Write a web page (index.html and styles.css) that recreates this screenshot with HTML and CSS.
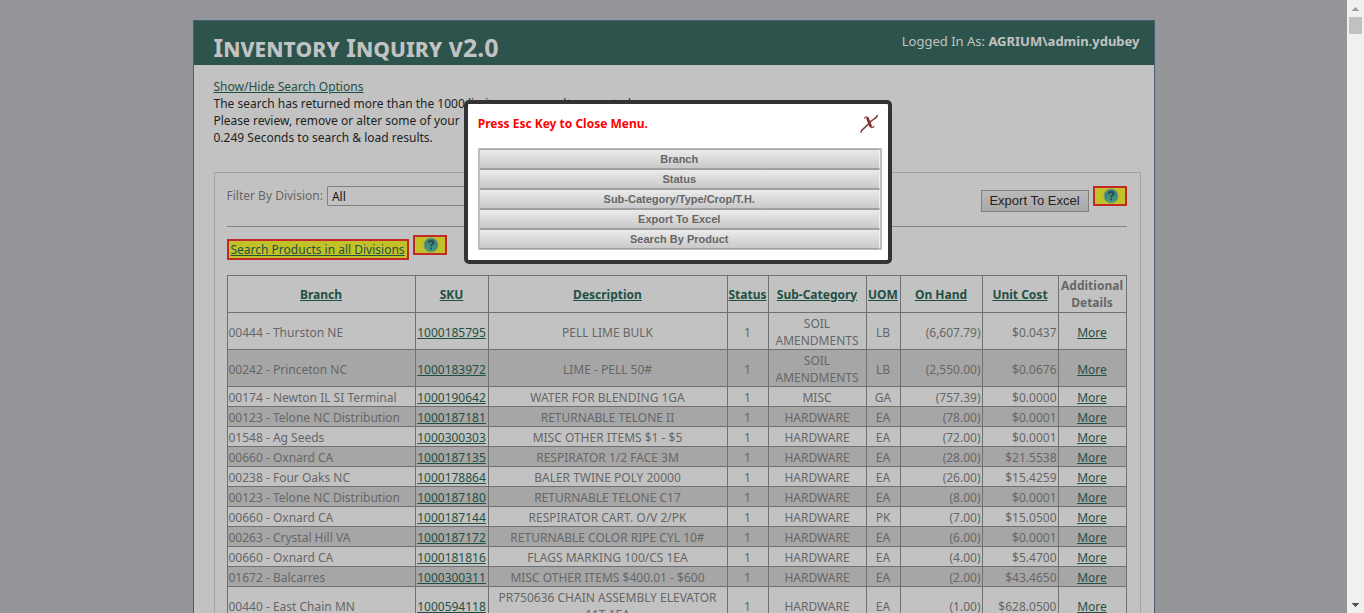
FILE: index.html
```html
<!DOCTYPE html>
<html lang="en">
<head>
<meta charset="utf-8">
<title>Inventory Inquiry v2.0</title>
<link rel="stylesheet" href="styles.css">
</head>
<body>
<svg width="0" height="0" class="defs" aria-hidden="true">
  <defs>
    <radialGradient id="ball" cx="50%" cy="80%" r="70%"><stop offset="0" stop-color="#43a07c"/><stop offset="1" stop-color="#427a80"/></radialGradient>
    <symbol id="help" viewBox="0 0 16 16">
      <circle cx="8" cy="8" r="7" fill="url(#ball)" stroke="#6d9f6c" stroke-width="1"/>
      <path d="M5.8 5.9C6 3.4 10.3 3.4 10.3 5.9C10.3 7.6 8.1 7.5 8.1 9.2" fill="none" stroke="#22504a" stroke-width="1.9"/>
      <path d="M7.1 10.4h2v2h-2z" fill="#22504a"/>
    </symbol>
  </defs>
</svg>
<div class="view">
  <div class="page">
    <header class="header">
      <h1 class="title">Inventory Inquiry v2.0</h1>
      <div class="login">Logged In As: <strong>AGRIUM\admin.ydubey</strong></div>
    </header>
    <main class="main">
      <div class="messages">
        <a href="#">Show/Hide Search Options</a>
        <p>The search has returned more than the 1000 limit or max results expected</p>
        <p>Please review, remove or alter some of your</p>
        <p>0.249 Seconds to search &amp; load results.</p>
      </div>
      <section class="panel">
        <div class="toolbar">
          <div class="filter">
            <label for="division">Filter By Division:</label>
            <select id="division" class="division"><option>All</option></select>
          </div>
          <div class="export">
            <button type="button" class="export-btn">Export To Excel</button>
            <button type="button" class="help" aria-label="Export help"><svg width="16" height="16"><use href="#help"/></svg></button>
          </div>
        </div>
        <div class="search-row">
          <a href="#" class="search-all">Search Products in all Divisions</a>
          <button type="button" class="help" aria-label="Search help"><svg width="16" height="16"><use href="#help"/></svg></button>
        </div>
        <table class="grid">
          <colgroup><col class="c-branch"><col class="c-sku"><col class="c-desc"><col class="c-status"><col class="c-sub"><col class="c-uom"><col class="c-hand"><col class="c-cost"><col class="c-more"></colgroup>
          <thead>
            <tr><th><a href="#">Branch</a></th><th><a href="#">SKU</a></th><th><a href="#">Description</a></th><th><a href="#">Status</a></th><th><a href="#">Sub-Category</a></th><th><a href="#">UOM</a></th><th><a href="#">On Hand</a></th><th><a href="#">Unit Cost</a></th><th>Additional<br>Details</th></tr>
          </thead>
          <tbody>
            <tr><td>00444 - Thurston NE</td><td><a href="#">1000185795</a></td><td>PELL LIME BULK</td><td>1</td><td>SOIL<br>AMENDMENTS</td><td>LB</td><td>(6,607.79)</td><td>$0.0437</td><td><a href="#">More</a></td></tr>
            <tr><td>00242 - Princeton NC</td><td><a href="#">1000183972</a></td><td>LIME - PELL 50#</td><td>1</td><td>SOIL<br>AMENDMENTS</td><td>LB</td><td>(2,550.00)</td><td>$0.0676</td><td><a href="#">More</a></td></tr>
            <tr><td>00174 - Newton IL SI Terminal</td><td><a href="#">1000190642</a></td><td>WATER FOR BLENDING 1GA</td><td>1</td><td>MISC</td><td>GA</td><td>(757.39)</td><td>$0.0000</td><td><a href="#">More</a></td></tr>
            <tr><td>00123 - Telone NC Distribution</td><td><a href="#">1000187181</a></td><td>RETURNABLE TELONE II</td><td>1</td><td>HARDWARE</td><td>EA</td><td>(78.00)</td><td>$0.0001</td><td><a href="#">More</a></td></tr>
            <tr><td>01548 - Ag Seeds</td><td><a href="#">1000300303</a></td><td>MISC OTHER ITEMS $1 - $5</td><td>1</td><td>HARDWARE</td><td>EA</td><td>(72.00)</td><td>$0.0001</td><td><a href="#">More</a></td></tr>
            <tr><td>00660 - Oxnard CA</td><td><a href="#">1000187135</a></td><td>RESPIRATOR 1/2 FACE 3M</td><td>1</td><td>HARDWARE</td><td>EA</td><td>(28.00)</td><td>$21.5538</td><td><a href="#">More</a></td></tr>
            <tr><td>00238 - Four Oaks NC</td><td><a href="#">1000178864</a></td><td>BALER TWINE POLY 20000</td><td>1</td><td>HARDWARE</td><td>EA</td><td>(26.00)</td><td>$15.4259</td><td><a href="#">More</a></td></tr>
            <tr><td>00123 - Telone NC Distribution</td><td><a href="#">1000187180</a></td><td>RETURNABLE TELONE C17</td><td>1</td><td>HARDWARE</td><td>EA</td><td>(8.00)</td><td>$0.0001</td><td><a href="#">More</a></td></tr>
            <tr><td>00660 - Oxnard CA</td><td><a href="#">1000187144</a></td><td>RESPIRATOR CART. O/V 2/PK</td><td>1</td><td>HARDWARE</td><td>PK</td><td>(7.00)</td><td>$15.0500</td><td><a href="#">More</a></td></tr>
            <tr><td>00263 - Crystal Hill VA</td><td><a href="#">1000187172</a></td><td>RETURNABLE COLOR RIPE CYL 10#</td><td>1</td><td>HARDWARE</td><td>EA</td><td>(6.00)</td><td>$0.0001</td><td><a href="#">More</a></td></tr>
            <tr><td>00660 - Oxnard CA</td><td><a href="#">1000181816</a></td><td>FLAGS MARKING 100/CS 1EA</td><td>1</td><td>HARDWARE</td><td>EA</td><td>(4.00)</td><td>$5.4700</td><td><a href="#">More</a></td></tr>
            <tr><td>01672 - Balcarres</td><td><a href="#">1000300311</a></td><td>MISC OTHER ITEMS $400.01 - $600</td><td>1</td><td>HARDWARE</td><td>EA</td><td>(2.00)</td><td>$43.4650</td><td><a href="#">More</a></td></tr>
            <tr><td>00440 - East Chain MN</td><td><a href="#">1000594118</a></td><td>PR750636 CHAIN ASSEMBLY ELEVATOR<br>11T 1EA</td><td>1</td><td>HARDWARE</td><td>EA</td><td>(1.00)</td><td>$628.0500</td><td><a href="#">More</a></td></tr>
          </tbody>
        </table>
      </section>
    </main>
  </div>
</div>
<div class="scrollbar" aria-hidden="true">
  <svg width="7" height="4"><path d="M0 4V3h1V2h1V1h1V0h1v1h1v1h1v1h1v1z" fill="#a3a3a3"/></svg>
  <div class="thumb"></div>
  <svg width="7" height="4" class="down"><path d="M0 0v1h1v1h1v1h1v1h1V3h1V2h1V1h1V0z" fill="#505050"/></svg>
</div>
<div class="dialog" role="dialog" aria-label="Help menu">
  <div class="dialog-head">
    <strong class="dialog-note">Press Esc Key to Close Menu.</strong>
    <button type="button" class="close" aria-label="Close"><svg width="18" height="20" viewBox="0 0 18 20">
      <path d="M4.2 4.4C6 2 7.4 2.4 8 4.4L10.4 12.2C11 14.2 12.8 14.2 14.2 12" fill="none" stroke="#86221f" stroke-width="1.1"/>
      <path d="M7.2 3.6L10.8 12.8" fill="none" stroke="#86221f" stroke-width="2.6"/>
      <path d="M17.4 1C17 4 14 4.4 11.6 6.8L5 13.4C3.4 15 0.8 15.6 1 18.8" fill="none" stroke="#7c3a3c" stroke-width="1.5"/>
    </svg></button>
  </div>
  <div class="menu">
    <button type="button">Branch</button>
    <button type="button">Status</button>
    <button type="button">Sub-Category/Type/Crop/T.H.</button>
    <button type="button">Export To Excel</button>
    <button type="button">Search By Product</button>
  </div>
</div>
</body>
</html>
```
FILE: styles.css
```css
* { box-sizing: border-box; }
body {
  margin: 0;
  height: 100vh;
  overflow: hidden;
  display: flex;
  font: 12px/17px "Noto Sans", "Open Sans", sans-serif;
  color: #666;
}
a { color: #1f5043; }
p, h1 { margin: 0; }
button { font: inherit; padding: 0; }
svg { display: block; }
.defs { position: absolute; }
.view { flex: 1; overflow: hidden; padding: 20px 20px 0; background: #949599; }
.page { max-width: 962px; margin: 0 auto; background: #c2c2c2; border: 1px solid #4c5c70; border-bottom: 0; }
.header {
  display: flex;
  justify-content: space-between;
  padding: 10px 14px 0 20px;
  height: 44px;
  background: #2c544c;
  color: #c2c2c2;
}
.title { font-size: 25px; line-height: 33px; font-variant: small-caps; }
.login { line-height: 20px; font-size: 13px; }
.main { padding: 13px 13px 0 20px; }
.messages { color: #222; }
.panel { margin-top: 26px; padding: 13px 13px 40px 12px; border: 1px solid #a2a2a2; }
.toolbar {
  display: flex;
  justify-content: space-between;
  height: 41px;
  border-bottom: 1px solid #858585;
}
.filter, .export, .search-row { display: flex; align-items: flex-start; gap: 4px; }
.filter { line-height: 20px; }
.division {
  width: 300px;
  height: 20px;
  padding: 0;
  font: inherit;
  color: #111;
  background: #c2c2c2;
  border: 1px solid #808080;
  border-radius: 1px;
}
.export-btn {
  margin-top: 4px;
  width: 108px;
  height: 22px;
  font: 13px/18px "Liberation Sans", Arial, sans-serif;
  color: #222;
  background: linear-gradient(#bababa, #a8a8a8);
  border: 1px solid #808080;
}
.help {
  display: flex;
  align-items: center;
  justify-content: center;
  width: 34px;
  height: 20px;
  padding-left: 3px;
  background: #c2c228;
  border: 2px solid #c22828;
}
.search-row { padding-top: 8px; }
.search-all { margin-top: 4px; padding: 0 2px; border: 2px solid #c22828; background: #c2c228; }
.grid {
  width: 100%;
  margin-top: 15px;
  table-layout: fixed;
  border-collapse: collapse;
}
.c-branch { width: 188px; }
.c-sku { width: 73px; }
.c-desc { width: 239px; }
.c-status { width: 41px; }
.c-sub { width: 98px; }
.c-uom { width: 34px; }
.c-hand { width: 82px; }
.c-cost { width: 76px; }
.c-more { width: 68px; }
.grid th, .grid td { padding: 1px 0; border: 1px solid #707070; text-align: center; white-space: nowrap; }
.grid td { padding: 2px 1px 0; }
.grid tr > td:first-child { text-align: left; }
.grid tr > td:nth-child(7), .grid tr > td:nth-child(8) { text-align: right; }
.grid tbody tr:nth-child(even) { background: #a6a6a6; }
.scrollbar {
  width: 17px;
  padding: 7px 2px 6px;
  display: flex;
  flex-direction: column;
  align-items: center;
  background: #f0f0f0;
}
.thumb { width: 13px; height: 17px; margin-top: 6px; background: #c1c1c1; }
.down { margin-top: auto; }
.dialog {
  position: absolute;
  top: 100px;
  left: 34%;
  width: 428px;
  padding: 10px 6px 10px 10px;
  background: #fff;
  border: 4px solid #333;
  border-radius: 5px;
}
.dialog-head { display: flex; justify-content: space-between; height: 34px; padding-right: 4px; }
.dialog-note { color: #f00; line-height: 20px; }
.close { align-self: flex-start; border: 0; background: none; }
.menu {
  display: flex;
  flex-direction: column;
  border: 2px solid #bebebe;
  border-top-width: 1px;
  border-bottom-width: 1px;
}
.menu button {
  height: 20px;
  font: bold 11px/16px "Liberation Sans", Arial, sans-serif;
  color: #666;
  background: linear-gradient(#ebebeb, #c9c9c9);
  border: 1px solid #a0a0a0;
  border-left: 0;
  border-right-color: #eee;
}
```
